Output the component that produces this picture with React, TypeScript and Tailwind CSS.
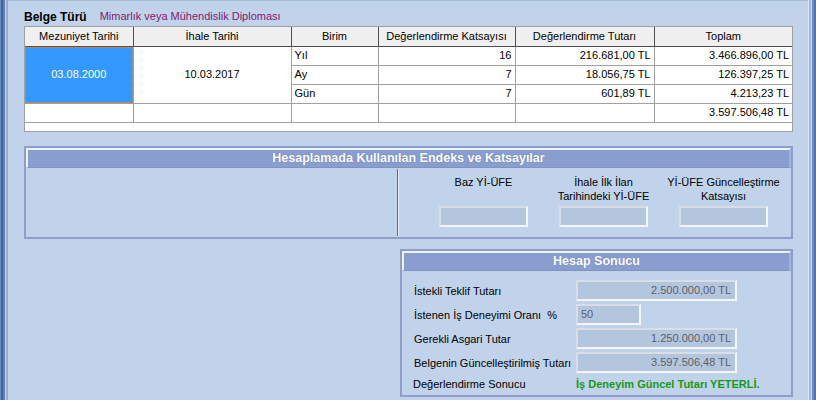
import React from 'react';

const font = { fontFamily: '"Liberation Sans", Arial, sans-serif' };

const rows = [
  { birim: 'Yıl', kat: '16', tutar: '216.681,00 TL', toplam: '3.466.896,00 TL' },
  { birim: 'Ay', kat: '7', tutar: '18.056,75 TL', toplam: '126.397,25 TL' },
  { birim: 'Gün', kat: '7', tutar: '601,89 TL', toplam: '4.213,23 TL' },
];

const PanelHeader = ({ title }: { title: string }) => (
  <div className="h-[20px] flex items-center justify-center bg-[#8a9dcf] border-t-2 border-l-2 border-t-[#eef2fa] border-l-[#eef2fa] border-r-2 border-r-[#a3b2da] border-b border-b-[#7f92c4]">
    <span className="text-white font-bold text-[12.5px] leading-none [text-shadow:0_0_1px_#5a6ea8]">{title}</span>
  </div>
);

const Box = ({ w, value, align = 'right' }: { w: string; value?: string; align?: 'right' | 'left' }) => (
  <div
    className={`${w} h-[21px] bg-[#b4c6de] border-2 border-t-[#d8dde6] border-l-[#d8dde6] border-r-[#f4f6fa] border-b-[#f4f6fa] flex items-center text-[11px] text-[#5c6068] ${
      align === 'right' ? 'justify-end pr-[4px]' : 'justify-start pl-[3px]'
    }`}
  >
    {value}
  </div>
);

export default function App() {
  return (
    <div className="w-[816px] h-[400px] flex bg-[#c0d3ea] overflow-hidden" style={font}>
      {/* left frame */}
      <div className="flex h-full">
        <div className="w-[1px] bg-[#6d8bbb]" />
        <div className="w-[2px] bg-[#42629a]" />
        <div className="w-[2px] bg-[#5f7fb2]" />
        <div className="w-[1px] bg-[#c4d2ea]" />
        <div className="w-[2px] bg-[#9aabd2]" />
      </div>

      <div className="flex-1 flex flex-col border-t border-[#a7bbdb] pl-[16px] pr-[15px]">
        {/* Belge türü */}
        <div className="h-[25px] flex items-center gap-[13px] pt-[6px]">
          <span className="font-bold text-[12px] text-black">Belge Türü</span>
          <span className="text-[11px] text-[#85166f]">Mimarlık veya Mühendislik Diploması</span>
        </div>

        {/* table */}
        <div className="w-[769px] border border-[#a0a0a0] bg-white text-[11px] text-black">
          <table className="border-collapse table-fixed w-[767px]">
            <colgroup>
              <col className="w-[108px]" />
              <col className="w-[158px]" />
              <col className="w-[87px]" />
              <col className="w-[137px]" />
              <col className="w-[139px]" />
              <col className="w-[138px]" />
            </colgroup>
            <thead>
              <tr className="h-[19px] bg-[#f0f0f0]">
                {['Mezuniyet Tarihi', 'İhale Tarihi', 'Birim', 'Değerlendirme Katsayısı', 'Değerlendirme Tutarı', 'Toplam'].map((h) => (
                  <th key={h} className="font-normal text-center border border-[#505050] border-t-0 first:border-l-0 last:border-r-0 p-0 leading-none">
                    {h}
                  </th>
                ))}
              </tr>
            </thead>
            <tbody>
              {rows.map((r, i) => (
                <tr key={r.birim} className="h-[19px]">
                  {i === 0 && (
                    <>
                      <td rowSpan={3} className="p-0 border border-[#a0a0a0] border-l-0 align-middle">
                        <div className="h-[56px] bg-[#3399ff] border border-dotted border-[#c89060] flex items-center justify-center text-white">
                          03.08.2000
                        </div>
                      </td>
                      <td rowSpan={3} className="p-0 border border-[#a0a0a0] text-center align-middle">
                        10.03.2017
                      </td>
                    </>
                  )}
                  <td className="p-0 pl-[3px] border border-[#a0a0a0] leading-none">{r.birim}</td>
                  <td className="p-0 pr-[3px] border border-[#a0a0a0] text-right leading-none">{r.kat}</td>
                  <td className="p-0 pr-[3px] border border-[#a0a0a0] text-right leading-none">{r.tutar}</td>
                  <td className="p-0 pr-[3px] border border-[#a0a0a0] border-r-0 text-right leading-none">{r.toplam}</td>
                </tr>
              ))}
              <tr className="h-[19px]">
                <td className="p-0 border border-[#a0a0a0] border-l-0" />
                <td className="p-0 border border-[#a0a0a0]" />
                <td className="p-0 border border-[#a0a0a0]" />
                <td className="p-0 border border-[#a0a0a0]" />
                <td className="p-0 border border-[#a0a0a0]" />
                <td className="p-0 pr-[3px] border border-[#a0a0a0] border-r-0 text-right leading-none">3.597.506,48 TL</td>
              </tr>
            </tbody>
          </table>
          <div className="h-[8px]" />
        </div>

        {/* Endeks panel */}
        <div className="mt-[14px] w-[769px] h-[93px] border-2 border-[#8e9dc9] flex flex-col">
          <PanelHeader title="Hesaplamada Kullanılan Endeks ve Katsayılar" />
          <div className="flex-1 flex">
            <div className="w-[372px] border-r border-[#6a6a70] my-[1px]" />
            <div className="w-[1px] bg-[#e8eef8] my-[1px]" />
            <div className="flex-1 flex pl-[40px] gap-[31px] pt-[7px] text-[11px] text-black">
              <div className="w-[89px] flex flex-col items-center">
                <div className="h-[31px] leading-[14px] text-center whitespace-nowrap">Baz Yİ-ÜFE</div>
                <Box w="w-[89px]" />
              </div>
              <div className="w-[89px] flex flex-col items-center">
                <div className="h-[31px] leading-[14px] text-center whitespace-nowrap">
                  İhale İlk İlan
                  <br />
                  Tarihindeki Yİ-ÜFE
                </div>
                <Box w="w-[89px]" />
              </div>
              <div className="w-[89px] flex flex-col items-center">
                <div className="h-[31px] leading-[14px] text-center whitespace-nowrap">
                  Yİ-ÜFE Güncelleştirme
                  <br />
                  Katsayısı
                </div>
                <Box w="w-[89px]" />
              </div>
            </div>
          </div>
        </div>

        {/* Hesap sonucu */}
        <div className="flex justify-end mt-[10px]">
          <div className="w-[393px] h-[148px] border-2 border-[#8e9dc9] flex flex-col">
            <PanelHeader title="Hesap Sonucu" />
            <div className="flex flex-col pt-[8px] pl-[12px] text-[11px] text-black">
              <div className="flex items-center h-[24px]">
                <span className="w-[162px] pt-[1px]">İstekli Teklif Tutarı</span>
                <Box w="w-[161px]" value="2.500.000,00 TL" />
              </div>
              <div className="flex items-center h-[24px]">
                <span className="w-[162px] pt-[1px] whitespace-pre">İstenen İş Deneyimi Oranı  %</span>
                <Box w="w-[65px]" value="50" align="left" />
              </div>
              <div className="flex items-center h-[24px]">
                <span className="w-[162px] pt-[1px]">Gerekli Asgari Tutar</span>
                <Box w="w-[161px]" value="1.250.000,00 TL" />
              </div>
              <div className="flex items-center h-[24px]">
                <span className="w-[162px] pt-[1px] whitespace-nowrap">Belgenin Güncelleştirilmiş Tutarı</span>
                <Box w="w-[161px]" value="3.597.506,48 TL" />
              </div>
              <div className="flex items-center h-[20px]">
                <span className="w-[163px] -ml-[1px]">Değerlendirme Sonucu</span>
                <span className="font-bold text-[#169a16]">İş Deneyim Güncel Tutarı YETERLİ.</span>
              </div>
            </div>
          </div>
        </div>
      </div>

      {/* right frame */}
      <div className="flex h-full">
        <div className="w-[1px] bg-[#e0e7f4]" />
        <div className="w-[2px] bg-[#a6b6dc]" />
        <div className="w-[1px] bg-[#d2dcee]" />
        <div className="w-[2px] bg-[#6f8bc2]" />
        <div className="w-[2px] bg-[#5473ad]" />
      </div>
    </div>
  );
}
